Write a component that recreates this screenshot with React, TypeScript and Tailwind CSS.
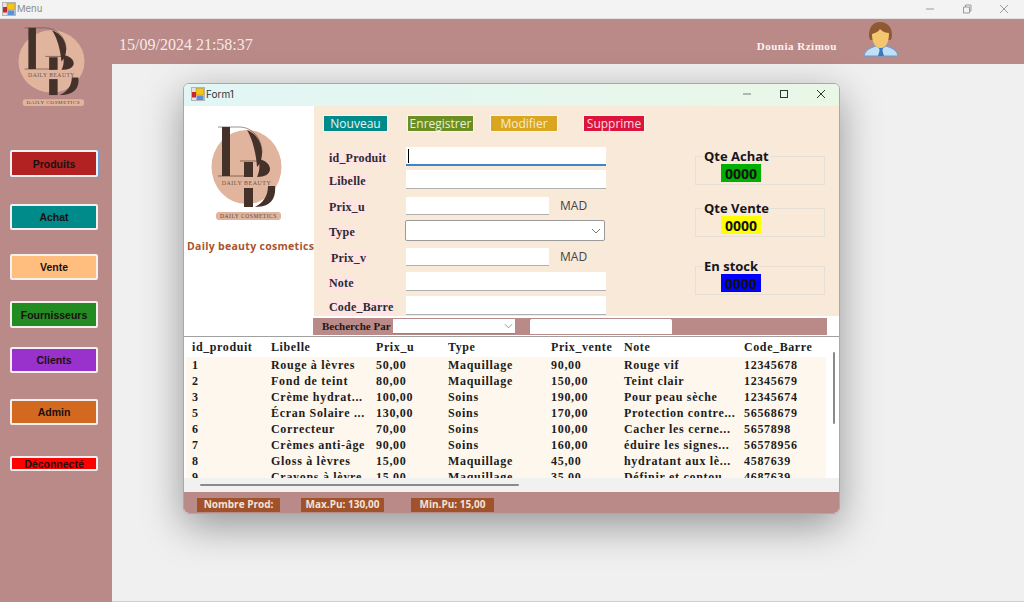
const sideButtons = [
  { label: 'Produits', bg: 'bg-[#b22222]', cls: 'h-[27px] mb-[27px] ring-1 ring-[#6f9fd8]' },
  { label: 'Achat', bg: 'bg-[#008b8b]', cls: 'h-[26px] mb-[24px]' },
  { label: 'Vente', bg: 'bg-[#ffbe7d]', cls: 'h-[26px] mb-[21px]' },
  { label: 'Fournisseurs', bg: 'bg-[#228b22]', cls: 'h-[27px] mb-[19px]' },
  { label: 'Clients', bg: 'bg-[#9932cc]', cls: 'h-[26px] mb-[26px]' },
  { label: 'Admin', bg: 'bg-[#d2691e]', cls: 'h-[26px] mb-[31px]' },
  { label: 'Déconnecté', bg: 'bg-[#ff0000]', cls: 'h-[15px]' },
]

const columns = ['w-[78px]', 'w-[104px]', 'w-[71px]', 'w-[102px]', 'w-[72px]', 'w-[119px]', 'w-[88px]']
const headers = ['id_produit', 'Libelle', 'Prix_u', 'Type', 'Prix_vente', 'Note', 'Code_Barre']
const rows = [
  ['1', 'Rouge à lèvres', '50,00', 'Maquillage', '90,00', 'Rouge vif', '12345678'],
  ['2', 'Fond de teint', '80,00', 'Maquillage', '150,00', 'Teint clair', '12345679'],
  ['3', 'Crème hydrat...', '100,00', 'Soins', '190,00', 'Pour peau sèche', '12345674'],
  ['5', 'Écran Solaire ...', '130,00', 'Soins', '170,00', 'Protection contre...', '56568679'],
  ['6', 'Correcteur', '70,00', 'Soins', '100,00', 'Cacher les cerne...', '5657898'],
  ['7', 'Crèmes anti-âge', '90,00', 'Soins', '160,00', 'éduire les signes...', '56578956'],
  ['8', 'Gloss à lèvres', '15,00', 'Maquillage', '45,00', 'hydratant aux lè...', '4587639'],
  ['9', 'Crayons à lèvre', '15,00', 'Maquillage', '35,00', 'Définir et contou', '4687639'],
]

const fields = [
  { label: 'id_Produit', cls: 'h-[19px] mb-[4px]', w: 'w-[200px]', focus: true },
  { label: 'Libelle', cls: 'h-[19px] mb-[8px]', w: 'w-[200px]' },
  { label: 'Prix_u', cls: 'h-[18px] mb-[5px]', w: 'w-[143px]', mad: true },
  { label: 'Type', cls: 'h-[21px] mb-[7px]', w: 'w-[200px]', combo: true },
  { label: 'Prix_v', cls: 'h-[18px] mb-[6px]', w: 'w-[143px]', mad: true, indent: true },
  { label: 'Note', cls: 'h-[19px] mb-[5px]', w: 'w-[200px]' },
  { label: 'Code_Barre', cls: 'h-[19px]', w: 'w-[200px]' },
]

const counters = [
  { title: 'Qte Achat', bg: 'bg-[#00b000]', cls: 'mb-[23px]' },
  { title: 'Qte Vente', bg: 'bg-[#ffff00]', cls: 'mb-[29px]' },
  { title: 'En stock', bg: 'bg-[#0000ff]', cls: '' },
]

function AppIcon() {
  return (
    <svg width="14" height="14" viewBox="0 0 14 14" className="shrink-0">
      <rect x="0.5" y="0.5" width="13" height="13" fill="#e4e4e4" stroke="#b4b4b4" />
      <rect x="5" y="1.5" width="7.5" height="6.5" fill="#f5c518" stroke="#b8860b" strokeWidth="0.5" />
      <rect x="1" y="5" width="4" height="5.5" fill="#c8262c" />
      <rect x="5.5" y="8.5" width="7" height="4.5" fill="#5b8fd8" />
    </svg>
  )
}

function Logo({ width, height }: { width: number; height: number }) {
  const dark = '#44312a'
  return (
    <svg width={width} height={height} viewBox="0 0 71 94" preserveAspectRatio="none" className="block">
      <ellipse cx="35.5" cy="41" rx="35" ry="37" fill="#e1b59d" />
      <path d="M7 1H28C42 1 51 13 51 27" fill="none" stroke="#5c4a42" strokeWidth="0.6" />
      <rect x="11" y="1" width="8" height="49" fill={dark} />
      <path d="M7 50H37" stroke={dark} strokeWidth="0.6" />
      <path d="M36 4C46 8 51 17 51 27 51 33 49 38 46 41 45 28 42 14 36 4Z" fill={dark} />
      <path d="M29 35H47" stroke={dark} strokeWidth="0.6" />
      <rect x="33" y="36" width="9" height="15" fill={dark} />
      <path d="M47 33C55 34 59 39 59 43 59 48 54 51 46 51 49 45 49 38 47 33Z" fill={dark} />
      <rect x="33" y="62" width="9" height="19" fill={dark} />
      <path d="M57 60H64C65 70 62 81 44 81 52 77 57 70 57 60Z" fill={dark} />
      <text x="35.500" y="59" textAnchor="middle" fontFamily="'Liberation Serif', serif" fontSize="6" letterSpacing="0.5" fill="#6f5548">
        DAILY BEAUTY
      </text>
      <rect x="5" y="86" width="65" height="8" rx="3" fill="#e1b59d" />
      <text x="37.500" y="92" textAnchor="middle" fontFamily="'Liberation Serif', serif" fontSize="5.600" letterSpacing="0.5" fill="#5e463b">
        DAILY COSMETICS
      </text>
    </svg>
  )
}

function Avatar() {
  return (
    <svg width="36" height="36" viewBox="0 0 36 36" className="block">
      <path d="M1 35C2 29 7 27 13 25L18 28 23 25C29 27 34 29 35 35Z" fill="#bfe0f7" stroke="#5f9fd6" strokeWidth="1" />
      <path d="M16 27H20L19.400 29.500 21 35H15L16.600 29.500Z" fill="#3f77bd" />
      <path d="M6 14C6 5 11 1 17 1 24 1 29 6 29 14 29 17 28 19 27 19L8 19C7 19 6 17 6 14Z" fill="#8f5a33" />
      <path d="M9 13C13 12 16 10 17 8 20 11 23 12 26 12 26 21 23 27 17.500 27 12 27 9 21 9 13Z" fill="#f4c76e" />
    </svg>
  )
}

function FieldBox({ w, focus, combo }: { w: string; focus?: boolean; combo?: boolean }) {
  if (combo) {
    return (
      <div className={`${w} h-full ml-[-1px] bg-white border border-[#9a9a9a] rounded-[2px] flex items-center justify-end pr-[3px]`}>
        <svg width="10" height="6" viewBox="0 0 10 6">
          <path d="M1 1l4 4 4-4" fill="none" stroke="#777" strokeWidth="1" />
        </svg>
      </div>
    )
  }
  return (
    <div className={`${w} h-full bg-white ${focus ? 'border-b-2 border-[#3d86c9]' : 'border-b border-[#b0b0b0]'} flex items-center pl-[2px]`}>
      {focus && <div className="w-px h-[14px] bg-black" />}
    </div>
  )
}

export default function App() {
  return (
    <div className="relative w-[1024px] h-[602px] overflow-hidden bg-[#f0f0f0] font-['Liberation_Sans',sans-serif]">
      {/* main window title */}
      <div className="h-[19px] bg-[#f3f3f3] border-b border-[#e2e2e2] flex items-center pl-[2px] pr-[15px]">
        <AppIcon />
        <span className="ml-px pt-px text-[#8c8c8c] text-[9.5px] font-['Inter',sans-serif]">Menu</span>
        <div className="ml-auto flex items-center gap-[27px] text-[#9a9a9a]">
          <svg width="10" height="10" viewBox="0 0 10 10"><path d="M1 5h8" stroke="currentColor" /></svg>
          <svg width="10" height="10" viewBox="0 0 10 10"><path d="M1.500 3h6v6h-6zM3.500 3V1h5.500v6H7.500" fill="none" stroke="currentColor" /></svg>
          <svg width="10" height="10" viewBox="0 0 10 10"><path d="M1 1l8 8M9 1l-8 8" stroke="currentColor" /></svg>
        </div>
      </div>

      <div className="flex h-[583px]">
        <aside className="w-[112px] shrink-0 bg-[#b98a88] pl-[10px]">
          <div className="ml-[8px] pt-[8px] h-[131px]">
            <Logo width={67} height={79} />
          </div>
          {sideButtons.map(b => (
            <button
              key={b.label}
              className={`block w-[88px] border-2 border-[#f4f0f0] rounded-[2px] pt-px text-[10.5px] font-bold text-[#1a1010] text-center leading-none ${b.bg} ${b.cls}`}
            >
              {b.label}
            </button>
          ))}
        </aside>
        <div className="flex-1 flex flex-col">
          <header className="h-[45px] shrink-0 bg-[#b98a88] flex items-center pl-[7px] pb-[1px]">
            <span className="mt-[8px] text-[#f6e9e7] text-[16px] font-['Liberation_Serif',serif]">15/09/2024 21:58:37</span>
            <span className="ml-[504px] mt-[11px] text-[#fbf3f1] text-[11px] font-bold tracking-[0.5px] font-['Liberation_Serif',serif]">Dounia Rzimou</span>
            <div className="ml-[26px] -mt-[5px]"><Avatar /></div>
          </header>
          <div className="flex-1 bg-[#f0f0f0] border-b border-[#d0d0d0]" />
        </div>
      </div>

      {/* Form1 */}
      <div className="absolute left-[183px] top-[83px] w-[657px] h-[431px] rounded-[6px] overflow-hidden bg-white border border-[#a9a9a9] shadow-[0_12px_40px_rgba(0,0,0,0.38)] flex flex-col">
        <div className="h-[22px] shrink-0 bg-gradient-to-r from-[#e2f6f6] to-[#e9f7e6] flex items-center pl-[7px] pr-[13px] pb-[2px]">
          <AppIcon />
          <span className="ml-px text-[#333] text-[10px] font-['Inter',sans-serif]">Form1</span>
          <div className="ml-auto flex items-center gap-[27px] text-[#333]">
            <svg width="10" height="10" viewBox="0 0 10 10"><path d="M1 5h8" stroke="#777" /></svg>
            <svg width="10" height="10" viewBox="0 0 10 10"><rect x="1.500" y="1.500" width="7" height="7" fill="none" stroke="currentColor" /></svg>
            <svg width="10" height="10" viewBox="0 0 10 10"><path d="M1 1l8 8M9 1l-8 8" stroke="currentColor" /></svg>
          </div>
        </div>

        <div className="flex h-[210px] shrink-0">
          <div className="w-[130px] shrink-0 bg-white">
            <div className="ml-[27px] pt-[20px]"><Logo width={71} height={94} /></div>
            <div className="mt-[19px] ml-[3px] whitespace-nowrap text-[#a7552f] text-[10.5px] font-bold tracking-[0.3px] font-['Open_Sans',sans-serif]">Daily beauty cosmetics</div>
          </div>
          <div className="flex-1 bg-[#f9e9d8] relative">
            <div className="flex pl-[9px] pt-[9px] h-[41px] items-start">
              <button className="w-[65px] h-[17px] bg-[#008b8b] border border-[#f6f6f6] text-[#e8f4f4] text-[12px] leading-none font-['Open_Sans',sans-serif]">Nouveau</button>
              <button className="ml-[19px] w-[67px] h-[17px] bg-[#6b8e23] border border-[#f6f6f6] text-[#e8f0dc] text-[12px] leading-none font-['Open_Sans',sans-serif]">Enregistrer</button>
              <button className="ml-[16px] w-[68px] h-[17px] bg-[#daa520] border border-[#f6f6f6] text-[#f7ecd0] text-[12px] leading-none font-['Open_Sans',sans-serif]">Modifier</button>
              <button className="ml-[25px] w-[62px] h-[17px] bg-[#dc143c] border border-[#f6f6f6] text-[#f8dce2] text-[12px] leading-none font-['Open_Sans',sans-serif]">Supprime</button>
            </div>
            <div className="flex">
              <div className="w-[381px] shrink-0">
                {fields.map(f => (
                  <div key={f.label} className={`flex items-center ${f.cls}`}>
                    <div className="w-[92px] shrink-0 pl-[14px]">
                      <span className={`inline-block bg-[#ffe4e1] px-[1px] text-[#2b2b33] text-[12px] font-bold tracking-[0.2px] leading-[15px] font-['Liberation_Serif',serif] ${f.indent ? 'ml-[2px]' : ''}`}>
                        {f.label}
                      </span>
                    </div>
                    <FieldBox w={f.w} focus={f.focus} combo={f.combo} />
                    {f.mad && <span className="ml-[11px] text-[#444] text-[12px] font-['Open_Sans',sans-serif]">MAD</span>}
                  </div>
                ))}
              </div>
              <div className="pt-[9px]">
                {counters.map(c => (
                  <div key={c.title} className={`relative w-[130px] h-[29px] border border-[#e6dfd6] ${c.cls}`}>
                    <span className="absolute left-[7px] -top-[9px] px-px bg-[#f9e9d8] text-[#15151f] text-[13px] font-bold leading-[16px] font-['Open_Sans',sans-serif]">{c.title}</span>
                    <div className={`absolute left-[25px] top-[7px] w-[40px] h-[18px] flex items-center justify-center text-[#101010] text-[14px] font-bold font-['Open_Sans',sans-serif] ${c.bg}`}>0000</div>
                  </div>
                ))}
              </div>
            </div>
          </div>
        </div>

        <div className="h-[20px] shrink-0 pt-[2px] bg-white">
          <div className="ml-[129px] w-[514px] h-[17px] bg-[#b98a88] flex items-center">
            <span className="w-[80px] pl-[9px] text-[#201818] text-[11px] font-bold whitespace-nowrap font-['Liberation_Serif',serif]">Becherche Par</span>
            <div className="w-[122px] h-[15px] bg-white border-b border-[#888] flex items-center justify-end pr-[2px]">
              <svg width="9" height="6" viewBox="0 0 10 6"><path d="M1 1l4 4 4-4" fill="none" stroke="#888" /></svg>
            </div>
            <div className="ml-[15px] w-[142px] h-[15px] bg-white rounded-t-[2px]" />
          </div>
        </div>

        {/* data grid */}
        <div className="relative flex-1 border-t border-[#a0a0a0] bg-white flex flex-col">
          <div className="h-[141px] shrink-0 overflow-hidden pl-[2px] w-[642px]">
            <div className="flex h-[20px] gap-[1px] bg-[#fff]">
              {headers.map((h, i) => (
                <div key={h} className={`${columns[i]} pl-[6px] flex items-center text-[#1c1c1c] text-[12px] font-bold tracking-[0.6px] font-['Liberation_Serif',serif] whitespace-nowrap`}>{h}</div>
              ))}
            </div>
            <div className="bg-[#fdf7ee]">
              {rows.map(r => (
                <div key={r[0]} className="flex h-[16px] gap-[1px] items-center">
                  {r.map((cell, i) => (
                    <div key={i} className={`${columns[i]} pl-[6px] text-[#1c1c1c] text-[12px] font-bold tracking-[0.7px] leading-[16px] whitespace-nowrap overflow-hidden font-['Liberation_Serif',serif]`}>{cell}</div>
                  ))}
                </div>
              ))}
            </div>
          </div>
          <div className="h-[14px] shrink-0 bg-[#f1f1f1] flex items-center pl-[16px]">
            <div className="w-[319px] h-[2px] bg-[#8a8a8a] rounded-full" />
          </div>
          <div className="flex-1 bg-[#b98a88] flex items-center pl-[13px] pt-[4px]">
            <span className="w-[83px] h-[14px] flex items-center justify-center bg-[#a0522d] text-[#f3e3d6] text-[10px] font-bold font-['Open_Sans',sans-serif]">Nombre Prod:</span>
            <span className="ml-[21px] w-[83px] h-[14px] flex items-center justify-center bg-[#a0522d] text-[#f3e3d6] text-[10px] font-bold font-['Open_Sans',sans-serif]">Max.Pu: 130,00</span>
            <span className="ml-[27px] w-[83px] h-[14px] flex items-center justify-center bg-[#a0522d] text-[#f3e3d6] text-[10px] font-bold font-['Open_Sans',sans-serif]">Min.Pu: 15,00</span>
          </div>
          <div className="absolute left-[649px] top-[15px] w-[2px] h-[72px] bg-[#8a8a8a] rounded-full" />
        </div>
      </div>
    </div>
  )
}
